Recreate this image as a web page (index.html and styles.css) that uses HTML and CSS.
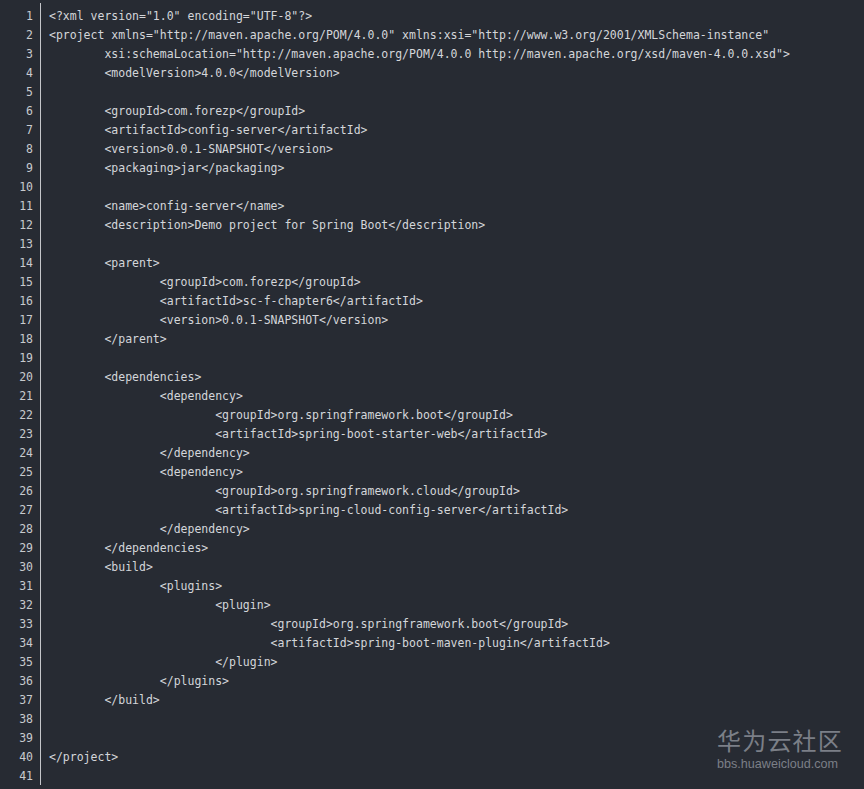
FILE: index.html
```html
<!DOCTYPE html>
<html lang="zh">
<head>
<meta charset="UTF-8">
<title>pom.xml</title>
<link rel="stylesheet" href="styles.css">
</head>
<body>
<div class="editor">
<div class="gutter"><div>1</div><div>2</div><div>3</div><div>4</div><div>5</div><div>6</div><div>7</div><div>8</div><div>9</div><div>10</div><div>11</div><div>12</div><div>13</div><div>14</div><div>15</div><div>16</div><div>17</div><div>18</div><div>19</div><div>20</div><div>21</div><div>22</div><div>23</div><div>24</div><div>25</div><div>26</div><div>27</div><div>28</div><div>29</div><div>30</div><div>31</div><div>32</div><div>33</div><div>34</div><div>35</div><div>36</div><div>37</div><div>38</div><div>39</div><div>40</div><div>41</div></div>
<pre class="code">&lt;?xml version="1.0" encoding="UTF-8"?&gt;
&lt;project xmlns="http://maven.apache.org/POM/4.0.0" xmlns:xsi="http://www.w3.org/2001/XMLSchema-instance"
	xsi:schemaLocation="http://maven.apache.org/POM/4.0.0 http://maven.apache.org/xsd/maven-4.0.0.xsd"&gt;
	&lt;modelVersion&gt;4.0.0&lt;/modelVersion&gt;

	&lt;groupId&gt;com.forezp&lt;/groupId&gt;
	&lt;artifactId&gt;config-server&lt;/artifactId&gt;
	&lt;version&gt;0.0.1-SNAPSHOT&lt;/version&gt;
	&lt;packaging&gt;jar&lt;/packaging&gt;

	&lt;name&gt;config-server&lt;/name&gt;
	&lt;description&gt;Demo project for Spring Boot&lt;/description&gt;

	&lt;parent&gt;
		&lt;groupId&gt;com.forezp&lt;/groupId&gt;
		&lt;artifactId&gt;sc-f-chapter6&lt;/artifactId&gt;
		&lt;version&gt;0.0.1-SNAPSHOT&lt;/version&gt;
	&lt;/parent&gt;

	&lt;dependencies&gt;
		&lt;dependency&gt;
			&lt;groupId&gt;org.springframework.boot&lt;/groupId&gt;
			&lt;artifactId&gt;spring-boot-starter-web&lt;/artifactId&gt;
		&lt;/dependency&gt;
		&lt;dependency&gt;
			&lt;groupId&gt;org.springframework.cloud&lt;/groupId&gt;
			&lt;artifactId&gt;spring-cloud-config-server&lt;/artifactId&gt;
		&lt;/dependency&gt;
	&lt;/dependencies&gt;
	&lt;build&gt;
		&lt;plugins&gt;
			&lt;plugin&gt;
				&lt;groupId&gt;org.springframework.boot&lt;/groupId&gt;
				&lt;artifactId&gt;spring-boot-maven-plugin&lt;/artifactId&gt;
			&lt;/plugin&gt;
		&lt;/plugins&gt;
	&lt;/build&gt;


&lt;/project&gt;
</pre>
</div>
<div class="watermark">
<div class="wm-title">华为云社区</div>
<div class="wm-url">bbs.huaweicloud.com</div>
</div>
</body>
</html>
```
FILE: styles.css
```css
html, body {
  margin: 0;
  padding: 0;
  background: #272b33;
  height: 100%;
  overflow: hidden;
}

.editor {
  display: flex;
  height: 789px;
  font-family: "DejaVu Sans Mono", "Liberation Mono", monospace;
  font-size: 11.5px;
  line-height: 19px;
  color: #d4d6da;
}

.gutter {
  width: 41px;
  box-sizing: border-box;
  padding: 7px 7px 0 0;
  margin-top: 3px;
  margin-bottom: 4px;
  border-right: 1px solid #c4c6ca;
  text-align: right;
  color: #c8cace;
}

.gutter div {
  height: 19px;
}

.gutter div:first-child {
  margin-top: -3px;
}

.code {
  margin: 0;
  padding: 7px 0 0 8px;
  font: inherit;
  tab-size: 8;
  -moz-tab-size: 8;
  white-space: pre;
}

.watermark {
  position: absolute;
  left: 717px;
  top: 727px;
  color: #7b7f87;
  font-family: "Noto Sans CJK SC", "Liberation Sans", sans-serif;
}

.wm-title {
  font-size: 24px;
  line-height: 26px;
  letter-spacing: 1.2px;
}

.wm-url {
  font-family: "Liberation Sans", Arial, sans-serif;
  font-size: 12.6px;
  line-height: 14px;
  margin-top: 4px;
}
```
